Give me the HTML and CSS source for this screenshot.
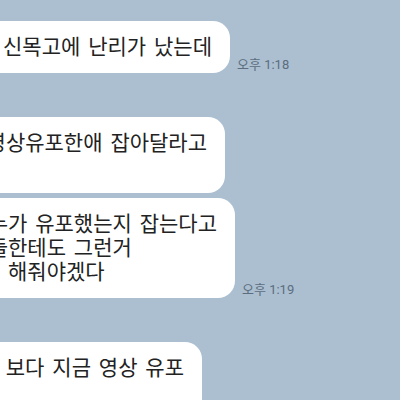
FILE: index.html
```html
<!DOCTYPE html>
<html lang="ko">
<head>
    <meta charset="UTF-8">
    <meta name="viewport" content="width=device-width, initial-scale=1.0">
    <title>채팅</title>
    <link rel="stylesheet" href="styles.css">
</head>
<body>

    <div class="chat">
        <div class="msg">
            <div class="bubble-wrap w-230">
                <div class="bubble">우리 학교 신목고에 난리가 났는데</div>
            </div>
            <span class="time">오후 1:18</span>
        </div>

        <div class="msg msg-gap">
            <div class="bubble-wrap w-225">
                <div class="bubble">경찰에 영상유포한애 잡아달라고<br>신고했대</div>
            </div>
        </div>

        <div class="msg">
            <div class="bubble-wrap w-235">
                <div class="bubble">선생님이 누가 유포했는지 잡는다고<br>전교 학생들한테도 그런거<br>예방교육을 해줘야겠다</div>
            </div>
            <span class="time">오후 1:19</span>
        </div>

        <div class="msg msg-gap">
            <div class="bubble-wrap w-202">
                <div class="bubble">근데 그거 보다 지금 영상 유포<br>된게</div>
            </div>
        </div>
    </div>

</body>
</html>
```

FILE: styles.css
```css
body {
    margin: 0;
    background-color: #abbfd1;
    font-family: "Noto Sans CJK KR", sans-serif;
    overflow: hidden;
}

.chat {
    display: flex;
    flex-direction: column;
    padding-top: 21px;
}

.msg {
    display: flex;
    align-items: flex-end;
    gap: 7px;
    margin-bottom: 5px;
}

.msg-gap {
    margin-top: 39px;
}

.bubble-wrap {
    display: flex;
    justify-content: flex-end;
    flex: none;
}

.w-230 { width: 230px; }
.w-225 { width: 225px; }
.w-235 { width: 235px; }
.w-202 { width: 202px; }

.bubble {
    flex: none;
    background-color: #fff;
    color: #222;
    font-size: 21px;
    word-spacing: 2px;
    line-height: 24px;
    padding: 12px 18px 16px 18px;
    border-radius: 17px;
    white-space: nowrap;
}

.time {
    font-family: Roboto, "Noto Sans CJK KR", sans-serif;
    font-size: 13px;
    color: #5b6d7e;
    line-height: 15px;
    margin-bottom: 1px;
    white-space: nowrap;
}
```
